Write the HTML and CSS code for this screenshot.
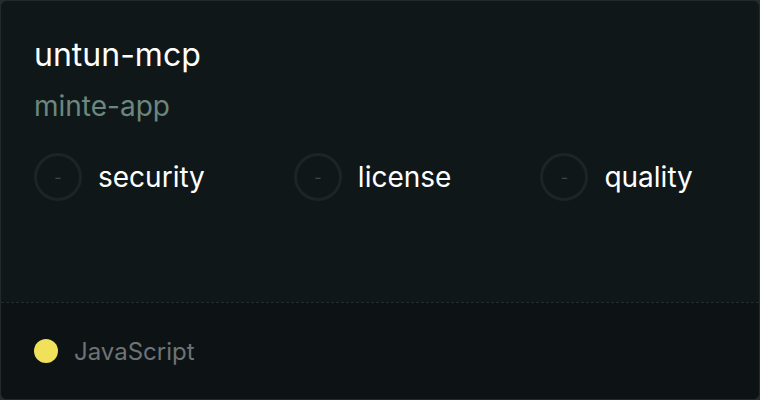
FILE: index.html
```html
<!DOCTYPE html>
<html>
<head>
<meta charset="utf-8">
<link rel="stylesheet" href="styles.css">
</head>
<body>
<div class="card">
  <div class="main">
    <div class="title">untun-mcp</div>
    <div class="owner">minte-app</div>
    <div class="scores">
      <div class="score"><span class="ring"><span class="dash">-</span></span><span class="label">security</span></div>
      <div class="score"><span class="ring"><span class="dash">-</span></span><span class="label">license</span></div>
      <div class="score"><span class="ring"><span class="dash">-</span></span><span class="label">quality</span></div>
    </div>
  </div>
  <div class="footer">
    <span class="lang-dot"></span>
    <span class="lang">JavaScript</span>
  </div>
</div>
</body>
</html>
```
FILE: styles.css
```css
html, body {
  margin: 0;
  padding: 0;
  background: #262d30;
}
body {
  width: 760px;
  height: 400px;
  font-family: Inter, "Noto Sans", sans-serif;
}
.card {
  box-sizing: border-box;
  width: 760px;
  height: 400px;
  border: 1px solid #222a2d;
  border-radius: 7px;
  overflow: hidden;
  display: flex;
  flex-direction: column;
  background: #101719;
}
.main {
  flex: 1;
  padding: 34px 33px 0 33px;
}
.title {
  color: #ffffff;
  font-size: 32px;
  line-height: 40px;
}
.owner {
  color: #6b877e;
  font-size: 28px;
  line-height: 34px;
  margin-top: 14px;
}
.scores {
  display: flex;
  gap: 89px;
  margin-top: 30px;
}
.score {
  display: flex;
  align-items: center;
  gap: 16px;
}
.ring {
  box-sizing: border-box;
  width: 48px;
  height: 48px;
  border: 3px solid #1d2426;
  border-radius: 50%;
  display: flex;
  align-items: center;
  justify-content: center;
}
.dash {
  color: #3d4548;
  font-size: 16px;
}
.label {
  color: #ffffff;
  font-size: 28px;
}
.footer {
  height: 96px;
  border-top: 1px dashed #232b2e;
  background: #0d1214;
  display: flex;
  align-items: center;
  padding-left: 33px;
  gap: 16px;
}
.lang-dot {
  width: 24px;
  height: 24px;
  border-radius: 50%;
  background: #f1e05a;
}
.lang {
  color: #6d7376;
  font-size: 24px;
}
```
